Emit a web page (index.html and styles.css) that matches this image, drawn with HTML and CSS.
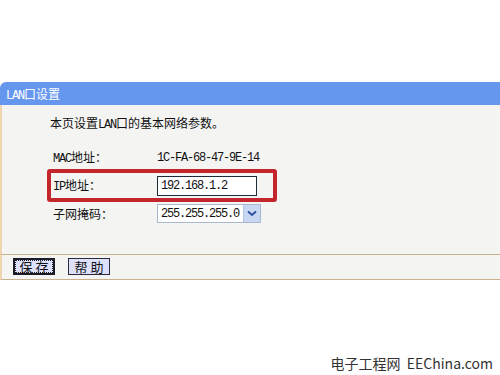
FILE: index.html
```html
<!DOCTYPE html>
<html lang="zh-CN">
<head>
  <meta charset="UTF-8">
  <title>LAN口设置</title>
  <link rel="stylesheet" href="styles.css">
</head>
<body>
  <div class="panel">
    <div class="title"><span class="en">LAN</span>口设置</div>
    <div class="content">
      <p class="intro">本页设置<span class="en">LAN</span>口的基本网络参数。</p>

      <div class="row">
        <span class="label"><span class="en">MAC</span>地址：</span>
        <span class="en value">1C-FA-68-47-9E-14</span>
      </div>

      <div class="row mark">
        <span class="label"><span class="en">IP</span>地址：</span>
        <span class="field en">192.168.1.2</span>
      </div>

      <div class="row">
        <span class="label">子网掩码：</span>
        <span class="select">
          <span class="en">255.255.255.0</span>
          <span class="arrow">
            <svg width="10" height="7" viewBox="0 0 10 7"><path d="M1 1.5 L5 5 L9 1.5" fill="none" stroke="#2d4f9e" stroke-width="2"/></svg>
          </span>
        </span>
      </div>
    </div>
    <div class="actions">
      <button class="btn focus"><span>保 存</span></button>
      <button class="btn"><span>帮 助</span></button>
    </div>
  </div>

  <div class="watermark">电子工程网&nbsp; EEChina.com</div>
</body>
</html>
```

FILE: styles.css
```css
body {
  margin: 0;
  padding-top: 82px;
  background-color: #fff;
  font-family: "Noto Sans CJK SC", "Liberation Sans", sans-serif;
  font-size: 12px;
  color: #111;
}
.en {
  font-family: "Liberation Mono", monospace;
  letter-spacing: -1.2px;
}
.title {
  height: 23px;
  line-height: 23px;
  padding-left: 6px;
  background-color: #6697ef;
  border-top-left-radius: 6px;
  color: #fff;
}
.content {
  background-color: #f4f4f3;
  border-left: 2px solid #f0d6b0;
  border-bottom: 1px solid #c8b18c;
  padding: 10px 0 31px 0;
}
.intro {
  margin: 0 0 16px 48px;
  line-height: 16px;
}
.row {
  display: flex;
  align-items: center;
  margin-left: 51px;
  line-height: 16px;
}
.label {
  width: 104px;
}
.mark {
  width: 220px;
  margin: 2px 0 2px 45px;
  padding: 3px 0 2px 2px;
  border: 4px solid #c3262c;
  border-radius: 3px;
}
.field {
  display: block;
  box-sizing: border-box;
  width: 100px;
  height: 20px;
  line-height: 18px;
  padding-left: 3px;
  background-color: #fff;
  border: 1px solid #1c2a3a;
}
.select {
  display: flex;
  align-items: center;
  gap: 4px;
  box-sizing: border-box;
  width: 104px;
  height: 19px;
  padding-left: 3px;
  background-color: #fff;
  border: 1px solid #a9b8cc;
}
.select .en {
  flex: 1;
}
.arrow {
  display: flex;
  align-items: center;
  justify-content: center;
  width: 16px;
  height: 17px;
  background-color: #c9d8f2;
  border-left: 1px solid #b4c6e6;
}
.actions {
  display: flex;
  gap: 13px;
  height: 25px;
  padding: 3px 0 0 13px;
  box-sizing: border-box;
  background-color: #f4f4f3;
  border-left: 2px solid #f0d6b0;
  border-bottom: 1px solid #c8b18c;
}
.btn {
  box-sizing: border-box;
  width: 42px;
  height: 17px;
  padding: 0;
  background-color: #dde0fa;
  border: 1px solid #2a2a3a;
  font-family: "Noto Sans CJK SC", sans-serif;
  font-size: 13px;
  color: #111;
}
.btn span {
  display: block;
  height: 100%;
  line-height: 15px;
}
.focus {
  border: 2px solid #1b1b2a;
  margin-left: -2px;
}
.focus span {
  box-sizing: border-box;
  outline: 1px dotted #222;
  outline-offset: -1px;
  line-height: 13px;
}
.watermark {
  margin-top: 74px;
  padding-right: 7px;
  text-align: right;
  line-height: 18px;
  font-size: 14px;
  color: #333;
}
```
